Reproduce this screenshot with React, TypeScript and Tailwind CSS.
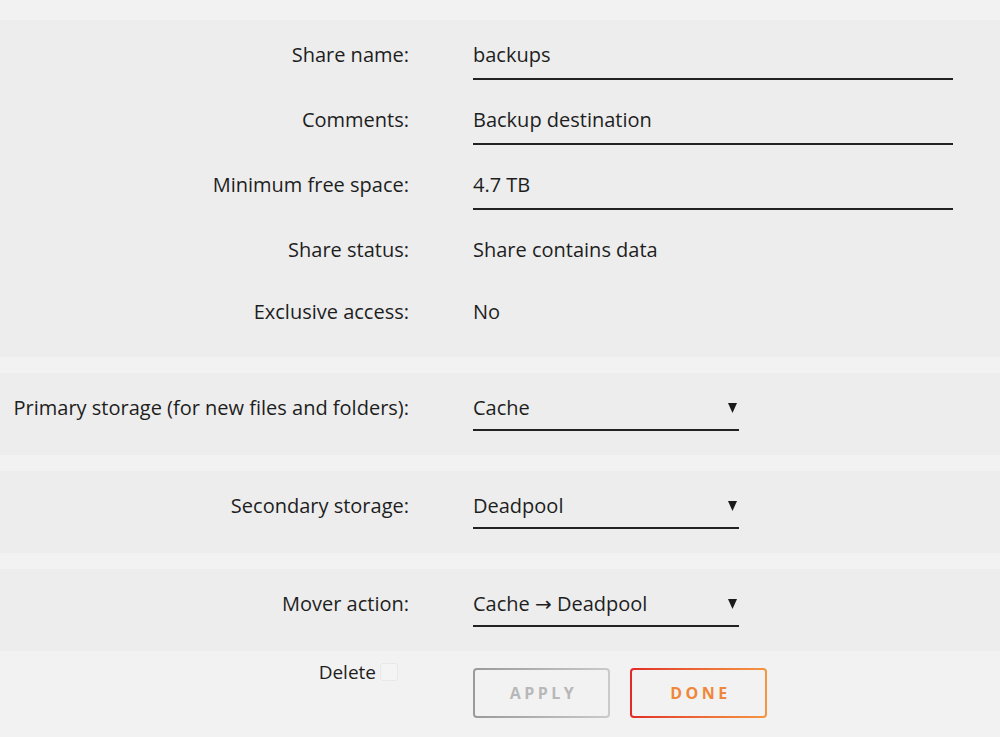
import React from 'react';

const font = { fontFamily: '"Open Sans", "Noto Sans", sans-serif' };

function Caret() {
  return (
    <svg width="9" height="10" viewBox="0 0 9 10" className="absolute right-[2px] top-[18px]">
      <path d="M0 0 H9 L4.5 10 Z" fill="#1a1a1a" />
    </svg>
  );
}

function Row({ label, children, top = 'pt-[11px]' }: { label: string; children: React.ReactNode; top?: string }) {
  return (
    <div className="flex items-start">
      <div className={`w-[409px] shrink-0 ${top} text-right leading-[24px]`}>{label}</div>
      <div className="ml-[64px]">{children}</div>
    </div>
  );
}

function Field({ value }: { value: string }) {
  return <div className="w-[480px] border-b-2 border-[#222] pt-[11px] pb-[11px] leading-[24px]">{value}</div>;
}

function Plain({ value, top = 'pt-[11px]' }: { value: string; top?: string }) {
  return <div className={`${top} pb-[13px] leading-[24px]`}>{value}</div>;
}

function Select({ value }: { value: React.ReactNode }) {
  return (
    <div className="relative w-[266px] border-b-2 border-[#222] pt-[11px] pb-[9px] leading-[24px]">
      {value}
      <Caret />
    </div>
  );
}

function Section({ label, value }: { label: string; value: React.ReactNode }) {
  return (
    <section className="mt-[16px] bg-[#ededed] pt-[12px] pb-[24px]">
      <Row label={label}>
        <Select value={value} />
      </Row>
    </section>
  );
}

export default function App() {
  return (
    <main className="min-h-screen bg-[#f2f2f2] pt-[20px] text-[20px] text-[#1e1e1e]" style={font}>
      <section className="flex flex-col gap-[17px] bg-[#ededed] pt-[12px] pb-[20px]">
        <Row label="Share name:"><Field value="backups" /></Row>
        <Row label="Comments:"><Field value="Backup destination" /></Row>
        <Row label="Minimum free space:"><Field value="4.7 TB" /></Row>
        <Row label="Share status:"><Plain value="Share contains data" /></Row>
        <Row label="Exclusive access:" top="pt-[8px]"><Plain value="No" top="pt-[8px]" /></Row>
      </section>

      <Section label="Primary storage (for new files and folders):" value="Cache" />
      <Section label="Secondary storage:" value="Deadpool" />
      <Section
        label="Mover action:"
        value={
          <>
            Cache <span style={{ fontFamily: '"DejaVu Sans", sans-serif' }}>→</span> Deadpool
          </>
        }
      />

      <div className="flex items-start">
        <div className="flex w-[398px] shrink-0 items-center justify-end pt-[9px]">
          <span className="text-[19px] leading-[24px]">Delete</span>
          <span className="ml-[4px] h-[18px] w-[18px] rounded-[3px] border border-[#e8e8e8] bg-[#f4f4f4]" />
        </div>
        <div className="ml-[75px] flex gap-[20px] pt-[17px]">
          <div className="rounded-[4px] bg-gradient-to-r from-[#9a9a9a] to-[#cacaca] p-[2px]">
            <div className="flex h-[46px] w-[133px] items-center justify-center rounded-[2px] bg-[#f2f2f2] pl-[4px] text-[16px] font-bold tracking-[3.5px] text-[#b8b8b8]">
              APPLY
            </div>
          </div>
          <div className="rounded-[4px] bg-gradient-to-r from-[#e22828] to-[#f39642] p-[2px]">
            <div className="flex h-[46px] w-[133px] items-center justify-center rounded-[2px] bg-[#f2f2f2] pl-[4px] text-[16px] font-bold tracking-[3.5px] text-[#ee873a]">
              DONE
            </div>
          </div>
        </div>
      </div>
    </main>
  );
}
